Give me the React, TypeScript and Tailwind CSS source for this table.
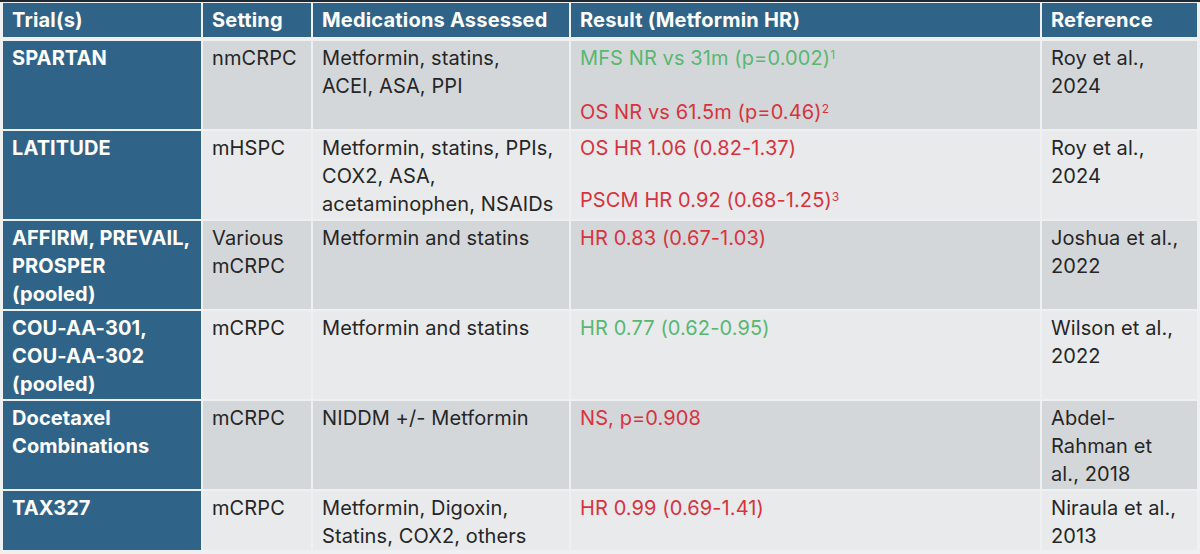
import type { ReactNode } from "react";

type Row = {
  trial: ReactNode;
  setting: ReactNode;
  meds: ReactNode;
  result: ReactNode;
  ref: ReactNode;
  shade: "dark" | "light";
  h: string;
};

const GREEN = "text-[#58b770]";
const RED = "text-[#d8333c]";

const rows: Row[] = [
  {
    trial: "SPARTAN",
    setting: "nmCRPC",
    meds: (
      <>
        Metformin, statins,
        <br />
        ACEI, ASA, PPI
      </>
    ),
    result: (
      <>
        <p className={GREEN}>
          MFS NR vs 31m (p=0.002)<sup className="text-[12px]">1</sup>
        </p>
        <p className={`${RED} mt-[26px]`}>
          OS NR vs 61.5m (p=0.46)<sup className="text-[12px]">2</sup>
        </p>
      </>
    ),
    ref: (
      <>
        Roy et al.,
        <br />
        2024
      </>
    ),
    shade: "dark",
    h: "h-[88px]",
  },
  {
    trial: "LATITUDE",
    setting: "mHSPC",
    meds: (
      <>
        Metformin, statins, PPIs,
        <br />
        COX2, ASA,
        <br />
        acetaminophen, NSAIDs
      </>
    ),
    result: (
      <>
        <p className={RED}>OS HR 1.06 (0.82-1.37)</p>
        <p className={`${RED} mt-[24px]`}>
          PSCM HR 0.92 (0.68-1.25)<sup className="text-[12px]">3</sup>
        </p>
      </>
    ),
    ref: (
      <>
        Roy et al.,
        <br />
        2024
      </>
    ),
    shade: "light",
    h: "h-[88px]",
  },
  {
    trial: (
      <>
        AFFIRM, PREVAIL,
        <br />
        PROSPER
        <br />
        (pooled)
      </>
    ),
    setting: (
      <>
        Various
        <br />
        mCRPC
      </>
    ),
    meds: "Metformin and statins",
    result: <p className={RED}>HR 0.83 (0.67-1.03)</p>,
    ref: (
      <>
        Joshua et al.,
        <br />
        2022
      </>
    ),
    shade: "dark",
    h: "h-[88px]",
  },
  {
    trial: (
      <>
        COU-AA-301,
        <br />
        COU-AA-302
        <br />
        (pooled)
      </>
    ),
    setting: "mCRPC",
    meds: "Metformin and statins",
    result: <p className={GREEN}>HR 0.77 (0.62-0.95)</p>,
    ref: (
      <>
        Wilson et al.,
        <br />
        2022
      </>
    ),
    shade: "light",
    h: "h-[88px]",
  },
  {
    trial: (
      <>
        Docetaxel
        <br />
        Combinations
      </>
    ),
    setting: "mCRPC",
    meds: "NIDDM +/- Metformin",
    result: <p className={RED}>NS, p=0.908</p>,
    ref: (
      <>
        Abdel-
        <br />
        Rahman et
        <br />
        al., 2018
      </>
    ),
    shade: "dark",
    h: "h-[88px]",
  },
  {
    trial: "TAX327",
    setting: "mCRPC",
    meds: (
      <>
        Metformin, Digoxin,
        <br />
        Statins, COX2, others
      </>
    ),
    result: <p className={RED}>HR 0.99 (0.69-1.41)</p>,
    ref: (
      <>
        Niraula et al.,
        <br />
        2013
      </>
    ),
    shade: "light",
    h: "h-[59px]",
  },
];

const headers = [
  "Trial(s)",
  "Setting",
  "Medications Assessed",
  "Result (Metformin HR)",
  "Reference",
];

export default function App() {
  return (
    <div
      className="h-[554px] w-[1200px] overflow-hidden bg-[#eef0f2]"
      style={{ fontFamily: "Inter, 'Liberation Sans', sans-serif" }}
    >
      <div className="h-[2px] bg-[#1d2833]" />
      <div className="grid grid-cols-[198px_108px_256px_469px_155px] gap-x-[2px] gap-y-[2px] pl-[3px] pt-[1px]">
        {headers.map((h) => (
          <div
            key={h}
            className="flex h-[34px] items-center whitespace-nowrap bg-[#2f6488] px-[9px] text-[20px] font-bold tracking-[0.2px] text-white"
          >
            {h}
          </div>
        ))}
        <div className="col-span-5 -mt-[1px] h-[1px]" />
        {rows.map((r, i) => {
          const bg = r.shade === "dark" ? "bg-[#d4d7da]" : "bg-[#e8eaec]";
          const cell = `${bg} ${r.h} whitespace-nowrap px-[9px] pt-[3px] text-[20px] leading-[28px] tracking-[0.1px] text-[#262626]`;
          return (
            <div key={i} className="contents">
              <div
                className={`${r.h} whitespace-nowrap bg-[#2f6488] px-[9px] pt-[3px] text-[20px] font-bold leading-[28px] tracking-[0.1px] text-white`}
              >
                {r.trial}
              </div>
              <div className={cell}>{r.setting}</div>
              <div className={cell}>{r.meds}</div>
              <div className={cell}>{r.result}</div>
              <div className={cell}>{r.ref}</div>
            </div>
          );
        })}
      </div>
    </div>
  );
}
